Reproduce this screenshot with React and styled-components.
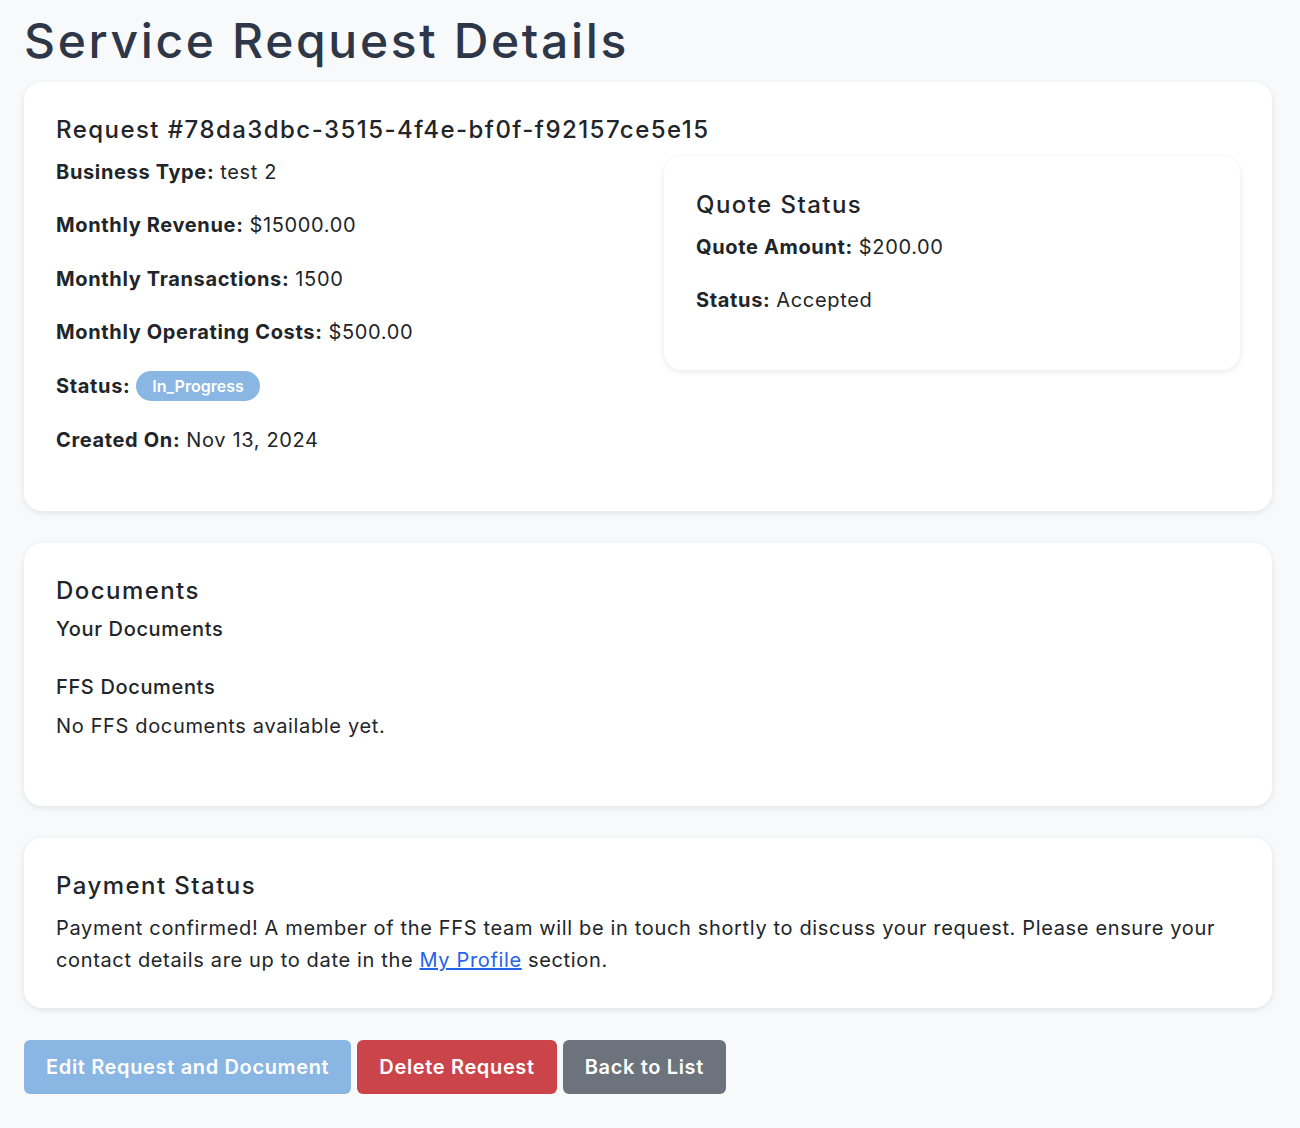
import React from 'react';
import styled, { createGlobalStyle } from 'styled-components';

const GlobalStyle = createGlobalStyle`
  body { margin: 0; background: #f8f9fb; font-family: Inter, "Noto Sans", sans-serif; color: #212529; }
  * { box-sizing: border-box; }
`;

const Page = styled.div` padding: 12px 28px 32px 24px; `;
const PageTitle = styled.h1` margin: 0 0 12px; font-size: 48px; line-height: 1.2; font-weight: 500; letter-spacing: 2.65px; color: #2d3748; `;
const Card = styled.section` background: #fff; border-radius: 18px; padding: 32px; margin-bottom: 32px; box-shadow: 0 2px 6px rgba(0, 0, 0, 0.09); `;
const QuoteCard = styled(Card)` margin: 0; padding-top: 33px; `;
const CardTitle = styled.h2` margin: 0 0 10px; font-size: 24px; line-height: 32px; font-weight: 500; letter-spacing: 1.45px; color: #212529; `;
const TwoCol = styled.div` display: grid; grid-template-columns: 1fr 1fr; gap: 32px; align-items: start; `;
const Column = styled.div` padding-bottom: 2px; `;
const Field = styled.p` margin: 0 0 21.6px; font-size: 20px; line-height: 32px; letter-spacing: 0.65px; display: flex; align-items: center; gap: 6px; `;
const Label = styled.strong` font-weight: 700; `;
const Badge = styled.span` display: inline-block; background: #89b6e3; color: #fff; font-size: 16px; font-weight: 600; line-height: 22px; letter-spacing: 0; padding: 4px 16px; border-radius: 15px; `;
const SubHeading = styled.h3` margin: 0 0 ${({ $gap }) => $gap}px; font-size: 20px; line-height: 24px; font-weight: 500; letter-spacing: 0.65px; `;
const Text = styled.p` margin: 0 0 ${({ $gap }) => $gap || 0}px; font-size: 20px; line-height: 32px; letter-spacing: 0.65px; `;
const Link = styled.a` color: #2563eb; text-decoration: underline; `;
const Actions = styled.div` display: flex; gap: 6px; `;
const Button = styled.button` border: none; border-radius: 6px; padding: 12px 22px; font-family: inherit; font-size: 20px; line-height: 30px; font-weight: 600; letter-spacing: 0.65px; color: #fff; background: ${({ $bg }) => $bg}; cursor: pointer; `;

const details = [
  ['Business Type:', 'test 2'],
  ['Monthly Revenue:', '$15000.00'],
  ['Monthly Transactions:', '1500'],
  ['Monthly Operating Costs:', '$500.00'],
];

const App = () => (
  <Page>
    <GlobalStyle />
    <PageTitle>Service Request Details</PageTitle>

    <Card>
      <CardTitle>Request #78da3dbc-3515-4f4e-bf0f-f92157ce5e15</CardTitle>
      <TwoCol>
        <Column>
          {details.map(([label, value]) => (
            <Field key={label}><Label>{label}</Label> {value}</Field>
          ))}
          <Field><Label>Status:</Label> <Badge>In_Progress</Badge></Field>
          <Field><Label>Created On:</Label> Nov 13, 2024</Field>
        </Column>
        <QuoteCard>
          <CardTitle>Quote Status</CardTitle>
          <Field><Label>Quote Amount:</Label> $200.00</Field>
          <Field><Label>Status:</Label> Accepted</Field>
        </QuoteCard>
      </TwoCol>
    </Card>

    <Card>
      <CardTitle>Documents</CardTitle>
      <SubHeading $gap={34}>Your Documents</SubHeading>
      <SubHeading $gap={11}>FFS Documents</SubHeading>
      <Text $gap={32}>No FFS documents available yet.</Text>
    </Card>

    <Card>
      <CardTitle>Payment Status</CardTitle>
      <Text>
        Payment confirmed! A member of the FFS team will be in touch shortly to discuss your request. Please ensure your contact details are up to date in the <Link href="#">My Profile</Link> section.
      </Text>
    </Card>

    <Actions>
      <Button $bg="#89b6e3">Edit Request and Document</Button>
      <Button $bg="#cb444a">Delete Request</Button>
      <Button $bg="#6c737c">Back to List</Button>
    </Actions>
  </Page>
);

export default App;
